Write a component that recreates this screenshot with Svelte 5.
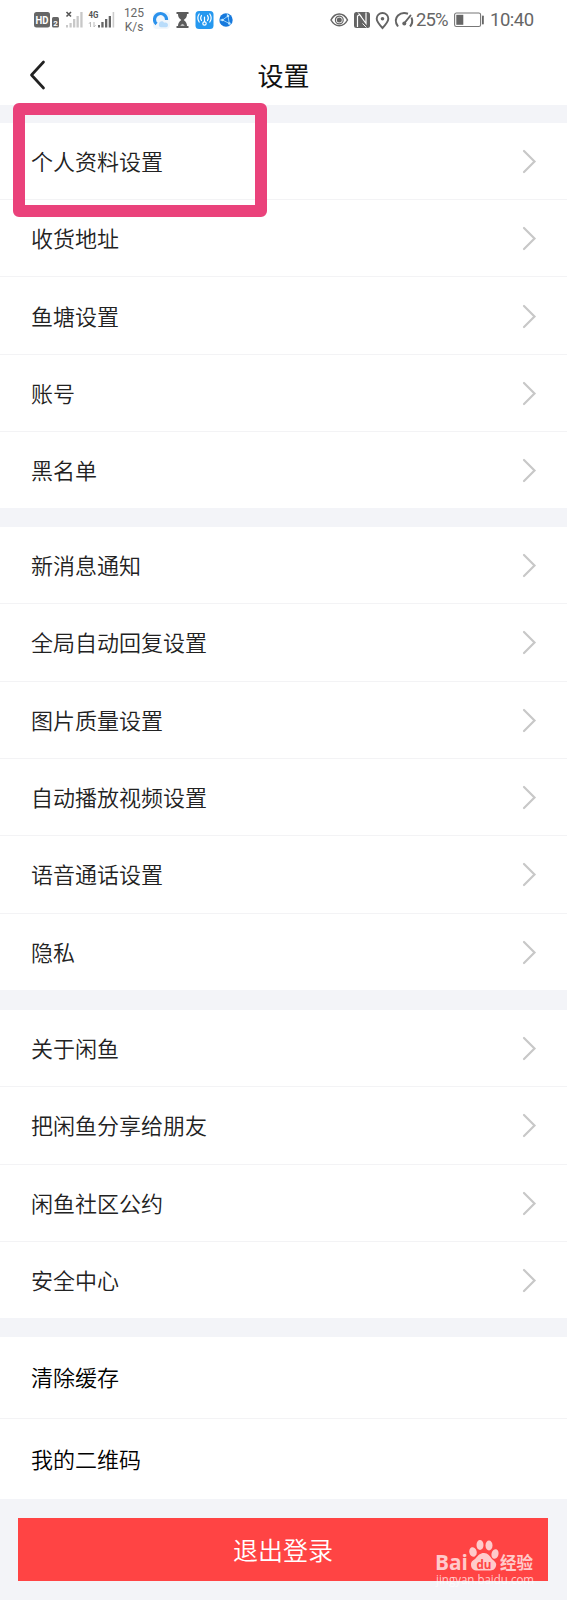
<script lang="ts">
  const groups = [
    { name: "profile", arrows: true, items: ["个人资料设置", "收货地址", "鱼塘设置", "账号", "黑名单"] },
    {
      name: "general",
      arrows: true,
      items: ["新消息通知", "全局自动回复设置", "图片质量设置", "自动播放视频设置", "语音通话设置", "隐私"],
    },
    { name: "about", arrows: true, items: ["关于闲鱼", "把闲鱼分享给朋友", "闲鱼社区公约", "安全中心"] },
    { name: "tools", arrows: false, items: ["清除缓存", "我的二维码"] },
  ]
</script>

<div class="screen">
  <div class="status-bar">
    <svg class="signals" width="86" height="24" viewBox="0 0 86 24">
      <rect x="0" y="4" width="16" height="15.500" rx="2.500" fill="#666" />
      <text class="hd" x="1.500" y="16" textLength="13" lengthAdjust="spacingAndGlyphs">HD</text>
      <rect x="18" y="9" width="7" height="10.500" rx="1.500" fill="#666" />
      <text class="sim" x="19.300" y="17.500">2</text>
      <path d="M32.500 4l4.500 4.500m0-4.500l-4.500 4.500" stroke="#555" stroke-width="1.600" />
      <g fill="#c8c8c8">
        <rect x="32" y="17" width="2" height="2.500" />
        <rect x="35.500" y="15" width="2.200" height="4.500" />
        <rect x="39" y="11" width="2.300" height="8.500" />
        <rect x="42.500" y="8" width="2.300" height="11.500" />
        <rect x="46.300" y="4" width="2.300" height="15.500" />
      </g>
      <text class="net" x="54.500" y="10" textLength="10" lengthAdjust="spacingAndGlyphs">4G</text>
      <path d="M56.500 19v-5l-1.500 1.800M60 14v5l1.500-1.800" fill="none" stroke="#bbb" />
      <g fill="#666">
        <rect x="64" y="17" width="2" height="2.500" />
        <rect x="67.300" y="14" width="2.300" height="5.500" />
        <rect x="71" y="11" width="2.300" height="8.500" />
        <rect x="74.700" y="8" width="2.300" height="11.500" />
      </g>
      <rect x="78.600" y="4" width="1.600" height="15.500" fill="#ccc" />
    </svg>

    <div class="speed">
      <span>125</span>
      <span>K/s</span>
    </div>

    <svg class="app-icons" width="84" height="22" viewBox="0 0 84 22">
      <rect x="0" y="3" width="17" height="17" rx="4" fill="#f1f6fb" />
      <path d="M3.500 15A6 6 0 1 1 13.500 11" fill="none" stroke="#2a91ec" stroke-width="3.200" />
      <path d="M6 15c0-3 4-3.500 5-1.300 2.500-.8 4 .8 4 2.300 0 2-1.500 2.300-3 2.300H8c-1.500 0-2.500-1-2-3.300z" fill="#b9dcfa" />
      <path
        d="M23.500 3h12v2H34c0 3-1 4.500-3.300 6 2.300 1.500 3.300 3.500 3.300 6h1.500v2h-12v-2H25c0-2.500 1-4.500 3.300-6C26 9.500 25 8 25 5h-1.500z"
        fill="#5c5c5c" />
      <path d="M27.500 17c0-1 1-1.700 2-2.200 1 .5 2 1.200 2 2.200z" fill="#bbb" />
      <rect x="42.500" y="2" width="18" height="18" rx="3.500" fill="#2598ef" />
      <g fill="none" stroke="#fff" stroke-width="1.200" stroke-linecap="round">
        <circle cx="51.500" cy="14.500" r="1.700" />
        <path d="M51.500 12.500V8M48.500 6.500q-1.700 2.500 0 5M46.200 5q-2.700 4 0 8M54.500 6.500q1.700 2.500 0 5M56.800 5q2.700 4 0 8" />
      </g>
      <circle cx="73" cy="11" r="6.700" fill="#1679dd" />
      <path
        d="M69.500 11L75 7l1.300 7.500zM69.500 11h-3M75 7l-1-2.500M76.300 14.500l1.500 1"
        fill="#1679dd"
        stroke="#a4dbff"
        stroke-width=".9" />
      <circle cx="69.500" cy="11" r="1.300" fill="#c5eaff" />
      <circle cx="75" cy="7" r="1.300" fill="#c5eaff" />
      <circle cx="76.300" cy="14.500" r="1.300" fill="#c5eaff" />
    </svg>

    <svg class="system-icons" width="85" height="22" viewBox="0 0 85 22">
      <g fill="none" stroke="#646464" stroke-width="1.500">
        <path d="M1 11C5 3 13.500 3 17.500 11 13.500 18.500 5 18.500 1 11z" />
        <circle cx="9.300" cy="11" r="3.900" stroke-width="1.200" />
        <path d="M52.500 19c-3.800-4-5.800-6.300-5.800-9.200a5.800 5.800 0 0 1 11.600 0c0 2.900-2 5.200-5.800 9.200z" stroke-width="1.900" />
        <path d="M68 17.500Q63.500 11 68 6.500 72 2.800 78 4.800M81.500 8.500q2 5-1.500 9" stroke-width="2" />
        <path d="M74.500 14L80.500 6.500" stroke-width="2" stroke-linecap="round" />
      </g>
      <circle cx="9.300" cy="11" r="2.500" fill="#646464" />
      <circle cx="52.500" cy="9.700" r="1.800" fill="#646464" />
      <circle cx="74.300" cy="14.500" r="2" fill="#646464" />
      <rect x="24" y="3" width="16" height="16" rx="2.500" fill="#646464" />
      <g fill="none" stroke="#fff" stroke-width="1.200">
        <path d="M27.500 18V7l2-1.500 6.500 9V3.500" />
        <path d="M28 3.500l3.500 4M32.500 14.500l4 4" stroke-width=".9" />
      </g>
    </svg>
    <span class="percent">25%</span>
    <svg class="battery" width="31" height="16" viewBox="0 0 31 16">
      <rect x=".6" y="1" width="26" height="13.500" rx="1.800" fill="none" stroke="#777" stroke-width="1.100" />
      <rect x="2.300" y="2.800" width="7" height="10" fill="#666" />
      <rect x="28" y="3.500" width="1.800" height="9" rx=".8" fill="#666" />
    </svg>
    <span class="clock">10:40</span>
  </div>

  <header>
    <svg class="back" width="18" height="32" viewBox="0 0 18 32">
      <path
        d="M14.500 3L2.500 16l12 13"
        fill="none"
        stroke="#222"
        stroke-width="2.700"
        stroke-linecap="round"
        stroke-linejoin="round" />
    </svg>
    <h1>设置</h1>
  </header>

  <main>
    {#each groups as group}
      <section class={group.name}>
        {#each group.items as item}
          <div class="row">
            <span>{item}</span>
            {#if group.arrows}
              <svg width="16" height="26" viewBox="0 0 16 26">
                <path
                  d="M2 3L12.500 13.500 2 24"
                  fill="none"
                  stroke="#c8c8c8"
                  stroke-width="2.200"
                  stroke-linecap="round" />
              </svg>
            {/if}
          </div>
        {/each}
      </section>
    {/each}
  </main>

  <button class="logout">退出登录</button>

  <div class="highlight"></div>

  <div class="watermark">
    <svg width="110" height="54" viewBox="0 0 110 54">
      <g fill="#fff" fill-opacity=".72">
        <text class="brand" x="4" y="34" textLength="33" lengthAdjust="spacingAndGlyphs">Bai</text>
        <ellipse cx="42" cy="16" rx="3.700" ry="4.800" transform="rotate(-15 42 16)" />
        <ellipse cx="49" cy="9" rx="3.500" ry="5" />
        <ellipse cx="58" cy="9.500" rx="3.500" ry="5" />
        <ellipse cx="64" cy="18" rx="3.500" ry="4.800" transform="rotate(15 64 18)" />
        <path d="M53 17c4 0 6 3.500 8 6 3 2.500 5 4.500 4 7-1 3.700-3.500 4.500-6.500 4.500H46.500c-4 0-6.500-2-6.500-6s3-4 5-6.500c2-2.500 4-5 8-5z" />
        <text class="chinese" x="69" y="33" textLength="33" lengthAdjust="spacingAndGlyphs">经验</text>
        <text class="url" x="5" y="47.500" textLength="98" lengthAdjust="spacingAndGlyphs">jingyan.baidu.com</text>
      </g>
      <text class="du" x="45.500" y="32.500" textLength="15" lengthAdjust="spacingAndGlyphs">du</text>
    </svg>
  </div>
</div>

<style>
  :global(body) {
    background: #f3f4f8;
  }

  .screen {
    position: relative;
    width: 567px;
    height: 1600px;
    overflow: hidden;
    background: #f3f4f8;
    color: #222;
    font-family: "Noto Sans CJK SC", sans-serif;
    font-weight: 350;
  }

  .status-bar {
    display: flex;
    align-items: center;
    box-sizing: border-box;
    height: 40px;
    padding-left: 34px;
    background: #fff;
    color: #666;
    font-family: Roboto, sans-serif;
  }

  svg {
    display: block;
    flex: none;
  }

  .hd,
  .sim {
    fill: #fff;
    font-size: 11px;
    font-weight: 700;
  }

  .sim {
    font-size: 8px;
  }

  .net {
    fill: #555;
    font-size: 9px;
    font-weight: 700;
  }

  .speed {
    display: flex;
    flex-direction: column;
    align-items: center;
    width: 26px;
    margin-left: 1px;
    font-size: 12px;
    line-height: 14px;
    font-weight: 400;
  }

  .app-icons {
    margin-left: 6px;
  }

  .system-icons {
    margin-left: 93px;
  }

  .percent,
  .clock {
    font-size: 18.5px;
    font-weight: 400;
    line-height: 40px;
  }

  .percent {
    width: 38px;
    margin-left: 1px;
    letter-spacing: -0.9px;
  }

  .clock {
    margin-left: 5px;
    letter-spacing: -0.5px;
  }

  header {
    display: grid;
    grid-template-columns: 100px 1fr 100px;
    align-items: center;
    height: 65px;
    background: #fff;
  }

  .back {
    margin: 4px 0 0 29px;
  }

  h1 {
    margin: 4px 0 0;
    text-align: center;
    font-size: 26px;
    line-height: 36px;
    font-weight: 400;
    color: #111;
  }

  main {
    display: flex;
    flex-direction: column;
    gap: 19px;
    padding-top: 18px;
  }

  section {
    display: flex;
    flex-direction: column;
    background: #fff;
  }

  .profile {
    height: 385px;
  }

  .general {
    height: 463px;
  }

  .about {
    height: 308px;
    margin-top: 1px;
  }

  .tools {
    height: 162px;
    color: #000;
  }

  .row {
    display: flex;
    flex: 1;
    align-items: center;
    justify-content: space-between;
    box-sizing: border-box;
    padding: 0 29px 0 31px;
    border-bottom: 1.5px solid #f3f3f5;
    font-size: 22px;
    line-height: 32px;
  }

  .row span {
    padding-bottom: 2px;
  }

  .row:last-child {
    border-bottom: none;
  }

  .logout {
    display: block;
    width: 530px;
    height: 63px;
    margin: 19px 0 0 18px;
    padding: 0 0 2px;
    border: none;
    background: #ff4444;
    color: #fff;
    font-family: inherit;
    font-size: 25px;
    font-weight: 350;
  }

  .highlight {
    position: absolute;
    top: 103px;
    left: 13px;
    box-sizing: border-box;
    width: 254px;
    height: 114px;
    border: 12px solid #ea427b;
    border-radius: 6px;
  }

  .watermark {
    position: absolute;
    top: 1536px;
    left: 431px;
  }

  .brand {
    font: 700 22px "Open Sans", sans-serif;
  }

  .chinese {
    font: 700 17px "Noto Sans CJK SC", sans-serif;
  }

  .url {
    font: 500 12px "Open Sans", sans-serif;
  }

  .du {
    fill: #ff4444;
    font: 700 13px "Open Sans", sans-serif;
  }
</style>
